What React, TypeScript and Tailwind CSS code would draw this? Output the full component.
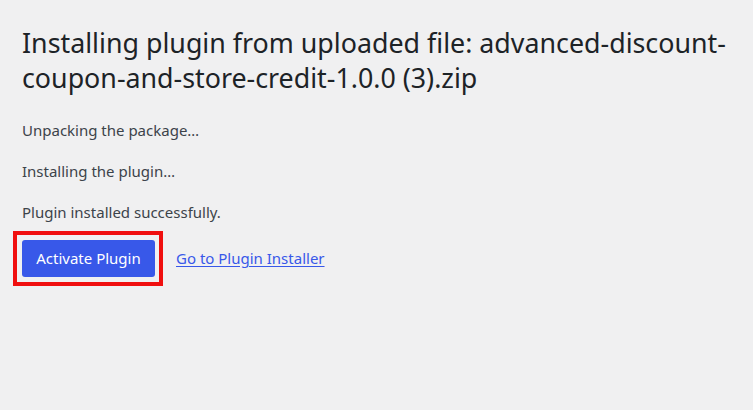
export default function App() {
  return (
    <div className="min-h-[410px] w-full bg-[#f0f0f1] pl-[22px] pt-[25px] font-['Noto_Sans',sans-serif] text-[#3c434a]">
      <h1 className="text-[26.8px] leading-[35px] font-normal text-[#1d2327]">
        Installing plugin from uploaded file: advanced-discount-coupon-and-store-credit-1.0.0 (3).zip
      </h1>

      <div className="mt-[24px] flex flex-col gap-[19px] text-[15px] leading-[22px]">
        <p>Unpacking the package&hellip;</p>
        <p>Installing the plugin&hellip;</p>
        <p>Plugin installed successfully.</p>
      </div>

      <div className="mt-[8px] flex items-center gap-[13px]">
        <div className="-ml-[9px] border-4 border-[#f00f0f] py-[5px] pr-[4px] pl-[5px]">
          <button className="h-[37px] w-[133px] rounded-[3px] bg-[#3858e9] text-[15px] text-white">
            Activate Plugin
          </button>
        </div>
        <a href="#" className="text-[15px] text-[#3858e9] underline underline-offset-2">
          Go to Plugin Installer
        </a>
      </div>
    </div>
  )
}
